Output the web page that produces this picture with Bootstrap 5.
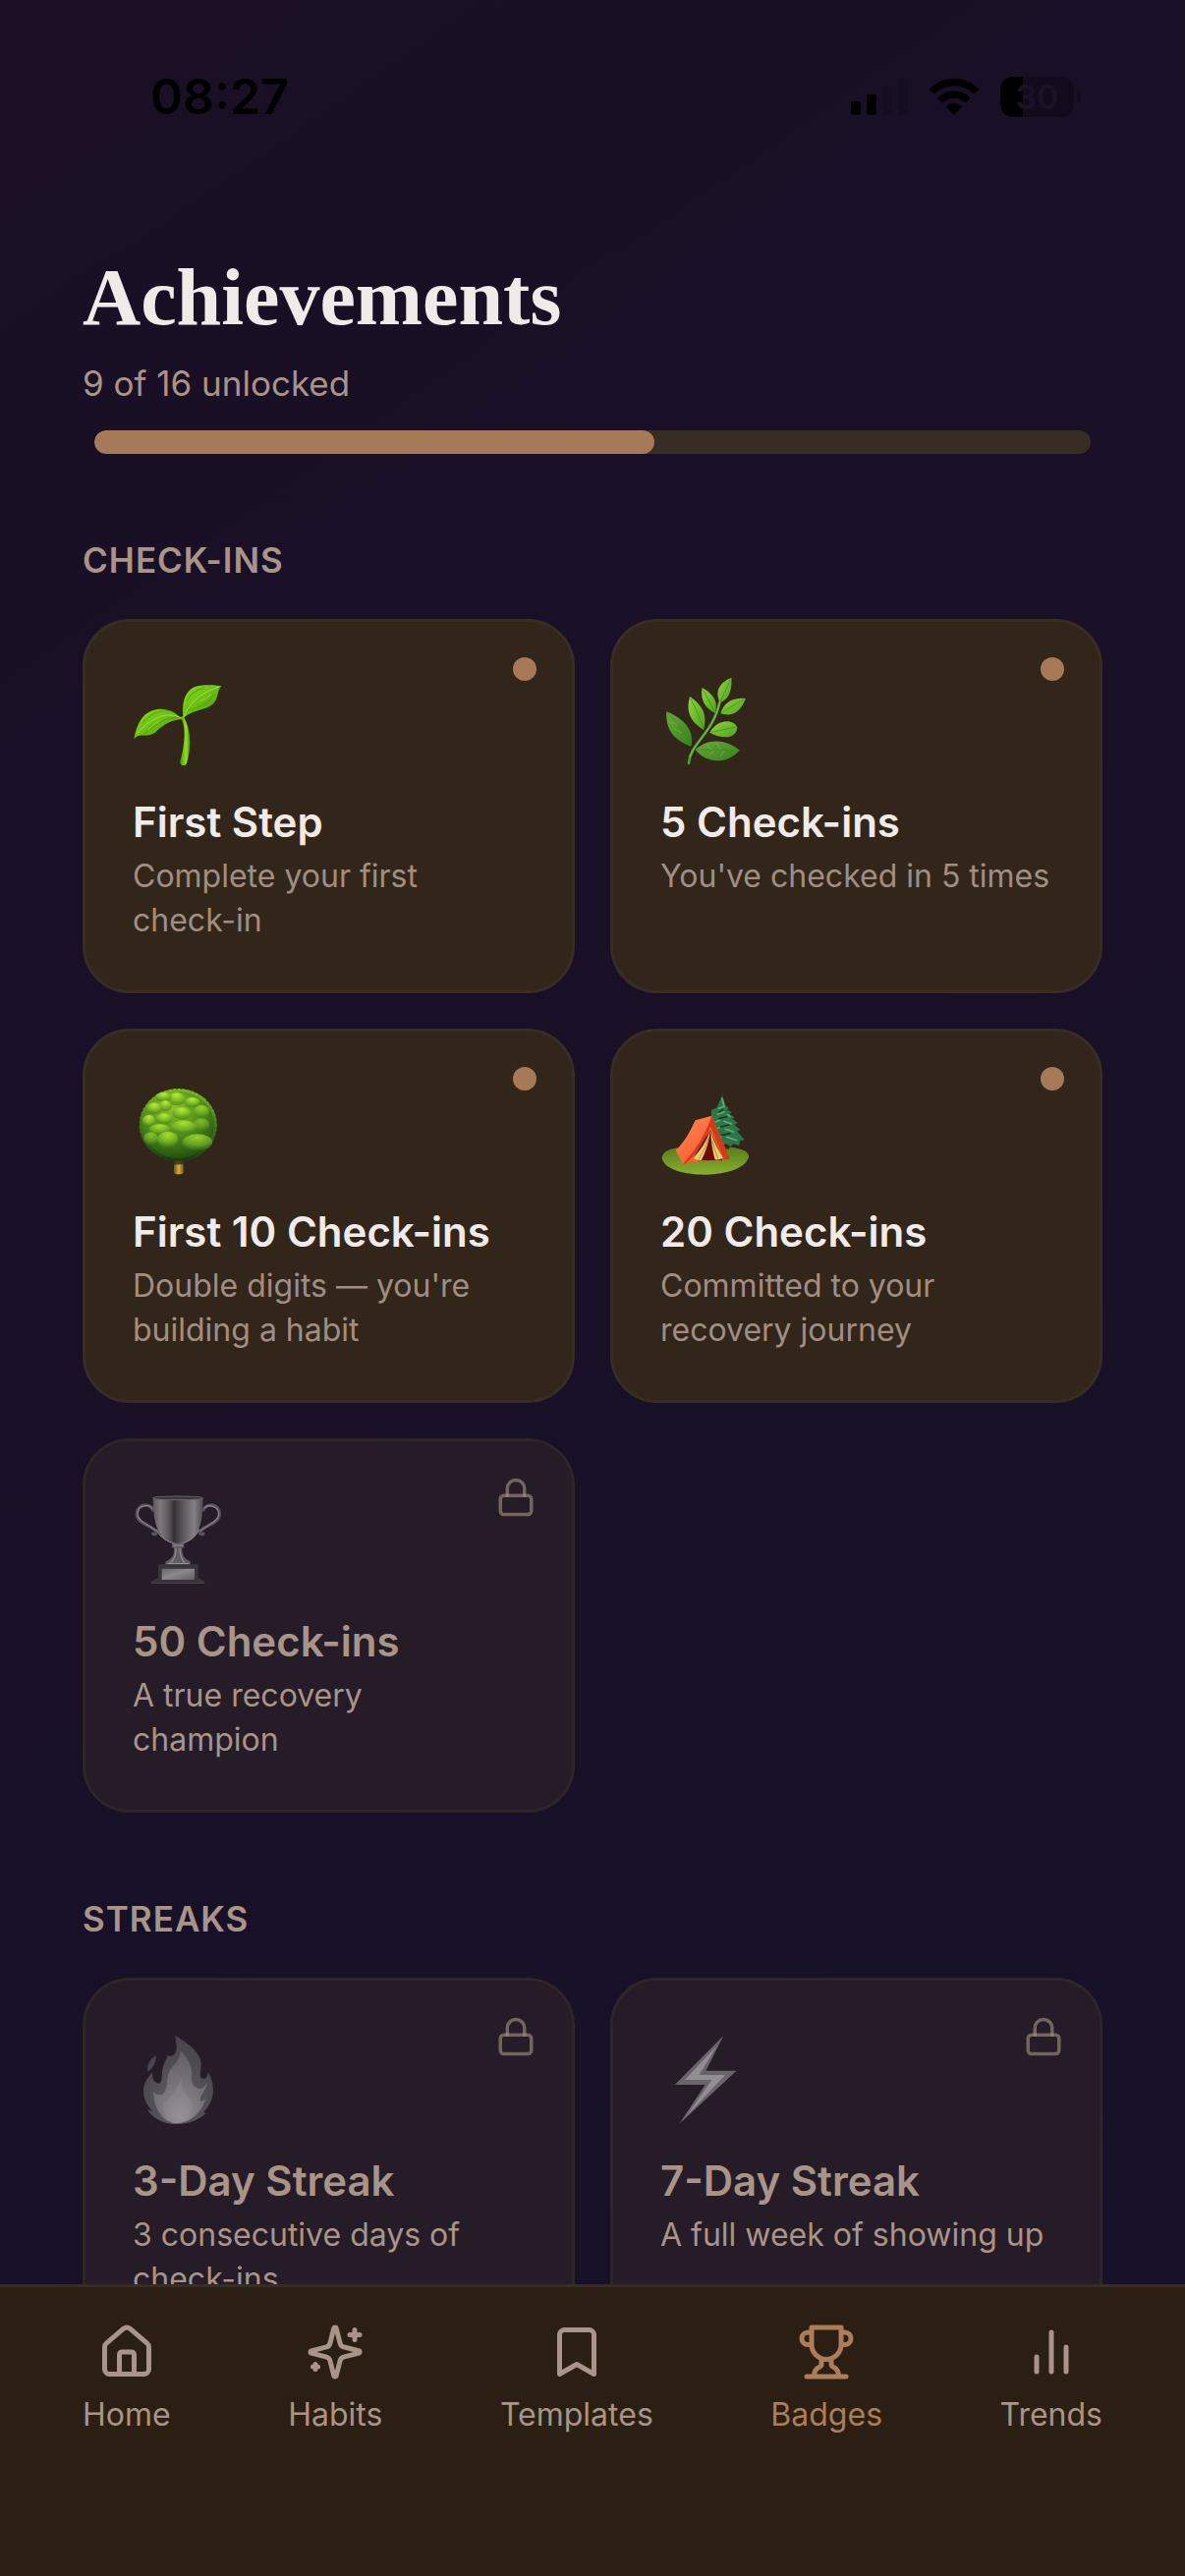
<!DOCTYPE html>
<html lang="en">
<head>
<meta charset="utf-8">
<meta name="viewport" content="width=device-width, initial-scale=1">
<title>Achievements</title>
<link rel="stylesheet" href="https://cdn.jsdelivr.net/npm/bootstrap@5.3.0/dist/css/bootstrap.min.css">
<style>
  :root {
    --accent: #a67a58;
    --muted: #a89488;
    --line: #382d24;
    --gutter: 84px;
  }
  body { font-family: Inter, "Liberation Sans", sans-serif; color: #f0ebe8; background: #1a1026; }
  .app { background: linear-gradient(145deg, #1a0f25 0%, #191027 50%, #161229 100%); }
  .scroll-area { scrollbar-width: none; min-height: 0; }
  .scroll-area::-webkit-scrollbar { display: none; }

  .statusbar { color: #000; padding: 68px 106px 0 153px; }
  .clock { font-size: 50px; line-height: 60px; font-weight: 600; }
  .status-icons { gap: 22px; }
  .battery { gap: 3px; }
  .battery-body { width: 75px; height: 41px; border-radius: 13px; font-size: 34px; line-height: 41px; font-weight: 600; color: #1b1128; background: linear-gradient(90deg, #000 31%, #130b1b 31%); }
  .battery-tip { width: 4px; height: 12px; border-radius: 0 4px 4px 0; background: #130b1b; }

  .page { padding: 127px var(--gutter) 60px; }
  .page-title { font-family: "Liberation Serif", serif; font-weight: 700; font-size: 82px; line-height: 96px; margin: 0 0 15px; }
  .unlocked-count { font-size: 35px; line-height: 48px; color: var(--muted); margin: 0 0 24px; }
  .progress { --bs-progress-height: 24px; --bs-progress-bg: #382d24; --bs-progress-bar-bg: var(--accent); --bs-progress-border-radius: 12px; margin: 0 12px; }
  .progress-bar { border-radius: 12px; }
  .section-label { font-size: 35px; line-height: 48px; font-weight: 600; letter-spacing: 1px; color: var(--muted); margin: 84px 0 36px; }
  .badge-grid { --bs-gutter-x: 36px; --bs-gutter-y: 36px; }

  .award { --bs-card-bg: #32261b; --bs-card-border-color: #382d24; --bs-card-border-width: 3px; --bs-card-border-radius: 48px; color: #f0ebe8; padding: 53px 40px 49px 48px; }
  .award.locked { --bs-card-bg: #251c27; --bs-card-border-color: #2d2526; color: var(--muted); }
  .award .art { width: 92px; height: 96px; margin-bottom: 28px; }
  .award h3 { font-size: 42px; line-height: 54px; font-weight: 600; margin: 0 0 5px; }
  .award p { font-size: 32px; line-height: 45px; min-height: 90px; margin: 0; color: #a18e82; }
  .award.locked p { color: var(--muted); }
  .award .earned { position: absolute; top: 36px; right: 36px; width: 24px; height: 24px; border-radius: 50%; background: var(--accent); }
  .award .lock { position: absolute; top: 36px; right: 36px; width: 42px; height: 42px; stroke: var(--muted); stroke-opacity: .6; }
  .line-icon { fill: none; stroke: currentColor; stroke-width: 2; stroke-linecap: round; stroke-linejoin: round; }

  .tabbar { background: #2b1f13; border-top: 3px solid var(--line); padding: 36px var(--gutter) 144px; }
  .tabbar a { color: var(--muted); font-size: 32px; line-height: 40px; gap: 14px; text-decoration: none; }
  .tabbar a.active { color: #ab7d59; }
  .tabbar svg { width: 60px; height: 60px; }
</style>
<script src="https://cdn.jsdelivr.net/npm/bootstrap@5.3.0/dist/js/bootstrap.bundle.min.js" defer></script>
</head>
<body>
<div class="app d-flex flex-column vh-100 overflow-hidden">
  <div class="scroll-area flex-grow-1 overflow-auto">
    <div class="statusbar d-flex justify-content-between align-items-center">
      <span class="clock">08:27</span>
      <div class="status-icons d-flex align-items-center">
        <svg width="58" height="37" viewBox="0 0 58 37" aria-hidden="true">
          <rect x="0" y="23" width="10" height="14" rx="3"/>
          <rect x="16" y="16" width="10" height="21" rx="3"/>
          <rect x="32" y="8" width="10" height="29" rx="3" fill="#150d20"/>
          <rect x="48" y="0" width="10" height="37" rx="3" fill="#150d20"/>
        </svg>
        <svg width="50" height="37" viewBox="0 0 50 37" aria-hidden="true">
          <path d="M25 0C35 0 43.500 4 49.500 10.200Q50.300 11 49.500 11.800L46 15.300Q45.200 16 44.400 15.200C39 10 32.500 7.300 25 7.300S11 10 5.600 15.200Q4.800 16 4 15.300L.5 11.800Q-.3 11 .5 10.200C6.500 4 15 0 25 0Z"/>
          <path d="M25 12.500C31.500 12.500 36.800 15 41 19Q41.800 19.800 41 20.600L37.300 24.200Q36.500 25 35.700 24.200C32.800 21.500 29.200 20 25 20S17.200 21.500 14.300 24.200Q13.500 25 12.700 24.200L9 20.600Q8.200 19.800 9 19C13.200 15 18.500 12.500 25 12.500Z"/>
          <path d="M25 25C28 25 30.500 26 32.500 27.700Q33.300 28.500 32.500 29.300L25.800 36.200Q25 37 24.200 36.200L17.500 29.300Q16.700 28.500 17.500 27.700C19.500 26 22 25 25 25Z"/>
        </svg>
        <div class="battery d-flex align-items-center">
          <span class="battery-body text-center">30</span>
          <span class="battery-tip"></span>
        </div>
      </div>
    </div>

    <main class="page">
      <h1 class="page-title">Achievements</h1>
      <p class="unlocked-count">9 of 16 unlocked</p>
      <div class="progress" role="progressbar" aria-label="Achievements unlocked" aria-valuenow="9" aria-valuemin="0" aria-valuemax="16">
        <div class="progress-bar" style="width: 56.25%"></div>
      </div>

      <h2 class="section-label">CHECK-INS</h2>
      <div class="row badge-grid">
        <div class="col-6">
          <article class="card award h-100">
            <span class="earned"></span>
            <svg class="art" viewBox="168 198 276 288" aria-hidden="true">
              <defs>
                <linearGradient id="leafA" x1="0" y1="0" x2="1" y2="1"><stop offset="0" stop-color="#8ae01c"/><stop offset=".5" stop-color="#6abb12"/><stop offset="1" stop-color="#4a8d0c"/></linearGradient>
                <linearGradient id="stemA" x1="0" x2="1"><stop offset="0" stop-color="#4b930a"/><stop offset=".6" stop-color="#8fe01c"/><stop offset="1" stop-color="#4f930c"/></linearGradient>
              </defs>
              <path d="M314 330C328 350 332 395 313 466Q312 477 324 477Q332 477 334 468C350 410 343 360 322 326Z" fill="url(#stemA)"/>
              <path d="M320 337C292 336 262 352 240 374C222 390 202 384 190 386Q180 386 172 397C176 372 184 346 202 326C234 296 286 298 320 337Z" fill="url(#leafA)"/>
              <path d="M322 336C318 290 324 254 356 238C384 228 418 232 440 235C428 244 430 258 424 274C408 314 348 302 322 336Z" fill="url(#leafA)"/>
              <g fill="none" stroke-linecap="round">
                <path d="M318 333C275 312 230 325 180 382" stroke="#9adf58" stroke-width="3"/>
                <path d="M325 328C340 290 370 258 430 238" stroke="#9adf58" stroke-width="3"/>
                <path d="M300 330C260 335 230 355 205 378M284 312C250 306 220 322 200 345M338 308C370 300 400 290 415 262M334 280C342 262 360 246 386 240" stroke="#4f9a0c" stroke-width="4" opacity=".55"/>
                <path d="M250 342Q228 354 214 370M372 282Q392 276 408 260" stroke="#a8ee40" stroke-width="3" opacity=".6"/>
              </g>
            </svg>
            <h3>First Step</h3>
            <p>Complete your first<br>check-in</p>
          </article>
        </div>
        <div class="col-6">
          <article class="card award h-100">
            <span class="earned"></span>
            <svg class="art" viewBox="189 198 276 288" aria-hidden="true">
              <defs>
                <linearGradient id="leafB" x1="0" y1="0" x2="1" y2="1"><stop offset="0" stop-color="#8dd63a"/><stop offset="1" stop-color="#4fa022"/></linearGradient>
                <linearGradient id="leafC" x1="0" y1="0" x2="1" y2="1"><stop offset="0" stop-color="#69a83a"/><stop offset="1" stop-color="#35821a"/></linearGradient>
              </defs>
              <path d="M276 470C280 410 350 380 370 285" fill="none" stroke="#4f9d2c" stroke-width="8" stroke-linecap="round"/>
              <path d="M279 450C300 400 355 365 370 285" fill="none" stroke="#82c64e" stroke-width="3" stroke-linecap="round"/>
              <path d="M208 313C250 330 296 362 283 420C238 402 204 376 208 313Z" fill="url(#leafC)"/>
              <path d="M296 430C330 395 386 395 431 431C392 475 330 472 296 430Z" fill="url(#leafC)"/>
              <path d="M279 267C310 288 336 316 321 369C288 346 264 322 279 267Z" fill="url(#leafB)"/>
              <path d="M317 240C348 258 368 280 356 317C326 302 310 278 317 240Z" fill="url(#leafB)"/>
              <path d="M406 209C408 245 402 272 371 286C354 250 370 224 406 209Z" fill="url(#leafB)"/>
              <path d="M450 273C434 310 414 332 373 318C384 284 410 270 450 273Z" fill="url(#leafB)"/>
              <path d="M340 377C360 338 412 332 424 362C420 396 380 398 340 377Z" fill="url(#leafB)"/>
              <path d="M210 317Q255 355 280 414M300 430H425M281 272Q302 310 320 362M319 245Q338 278 354 312M404 214Q388 250 373 282M445 275Q405 296 378 316M345 376Q380 368 418 360" fill="none" stroke="#3c8a1c" stroke-width="3" opacity=".7"/>
              <path d="M222 344l20 8M230 364l24 14M330 412l16 18M360 408l14 20M340 444l14-12M372 450l12-18" fill="none" stroke="#85c258" stroke-width="3" opacity=".5"/>
            </svg>
            <h3>5 Check-ins</h3>
            <p>You've checked in 5 times</p>
          </article>
        </div>
        <div class="col-6">
          <article class="card award h-100">
            <span class="earned"></span>
            <svg class="art" viewBox="168 189 276 288" aria-hidden="true">
              <defs>
                <radialGradient id="crown" cx=".42" cy=".25" r=".8"><stop offset="0" stop-color="#8fc528"/><stop offset=".5" stop-color="#4f8f1a"/><stop offset="1" stop-color="#1c4212"/></radialGradient>
                <radialGradient id="puff" cx=".5" cy=".2" r=".8"><stop offset="0" stop-color="#b4ee34"/><stop offset=".6" stop-color="#76b224"/><stop offset="1" stop-color="#3f7a18" stop-opacity=".5"/></radialGradient>
                <linearGradient id="rim" x1="0" y1="0" x2="0" y2="1"><stop offset="0" stop-color="#7db426"/><stop offset=".5" stop-color="#3f7c1a"/><stop offset="1" stop-color="#1c4212"/></linearGradient>
                <linearGradient id="trunk" x1="0" x2="1"><stop offset="0" stop-color="#6a4e18"/><stop offset=".5" stop-color="#d8ac3c"/><stop offset="1" stop-color="#7a5a20"/></linearGradient>
              </defs>
              <path d="M294 415H323V460Q323 466 308 466T294 460Z" fill="url(#trunk)"/>
              <path d="M294 415H323V436H294Z" fill="#2a2410" opacity=".75"/>
              <ellipse cx="307" cy="315" rx="116" ry="108" fill="url(#crown)"/>
              <ellipse cx="307" cy="315" rx="114" ry="106" fill="none" stroke="url(#rim)" stroke-width="10" stroke-linecap="round" stroke-dasharray="5 9"/>
              <g fill="url(#puff)">
                <ellipse cx="302" cy="236" rx="28" ry="20"/><ellipse cx="262" cy="230" rx="24" ry="15"/><ellipse cx="350" cy="246" rx="24" ry="16"/>
                <ellipse cx="268" cy="257" rx="20" ry="17"/><ellipse cx="234" cy="265" rx="24" ry="18"/><ellipse cx="318" cy="280" rx="29" ry="19"/>
                <ellipse cx="264" cy="296" rx="26" ry="17"/><ellipse cx="218" cy="303" rx="20" ry="19"/><ellipse cx="378" cy="274" rx="24" ry="20" opacity=".7"/>
                <ellipse cx="324" cy="322" rx="40" ry="21" opacity=".85"/><ellipse cx="250" cy="329" rx="33" ry="17" opacity=".85"/><ellipse cx="378" cy="315" rx="25" ry="20" opacity=".5"/>
                <ellipse cx="275" cy="360" rx="32" ry="25" opacity=".85"/><ellipse cx="366" cy="368" rx="46" ry="25" opacity=".75"/><ellipse cx="224" cy="357" rx="23" ry="20" opacity=".6"/>
              </g>
              <path d="M240 398Q300 440 374 398Q340 425 307 425T240 398Z" fill="#1b3a10" opacity=".8"/>
            </svg>
            <h3>First 10 Check-ins</h3>
            <p>Double digits — you're<br>building a habit</p>
          </article>
        </div>
        <div class="col-6">
          <article class="card award h-100">
            <span class="earned"></span>
            <svg class="art" viewBox="189 189 276 288" aria-hidden="true">
              <defs>
                <linearGradient id="grass" x1="0" y1="0" x2="0" y2="1"><stop offset="0" stop-color="#587c1c"/><stop offset="1" stop-color="#86b02e"/></linearGradient>
                <linearGradient id="tent" x1="0" y1="0" x2="1" y2="1"><stop offset="0" stop-color="#ff8d55"/><stop offset=".5" stop-color="#fb6a3c"/><stop offset="1" stop-color="#d8401c"/></linearGradient>
              </defs>
              <path d="M194 417C194 382 262 380 326 380S459 382 459 412C452 446 392 467 326 467S200 450 194 417Z" fill="url(#grass)"/>
              <path d="M386 365h13v24h-13z" fill="#3a2812"/>
              <path d="M378 225L389 257L399 264L392 268L408 276L399 281L416 292L408 296L426 309L415 314L433 330L423 334L446 360L432 364L430 379L412 373L404 381L390 373L372 378L345 350V270L362 262Z" fill="#2e7548"/>
              <path d="M378 235l6 24-16 6M384 275l-20 8M394 283l8 6M372 300l-14 6M384 304l22 8M370 323l-14 5M388 328l24 8M376 350l-12 6M392 352l30 10" fill="none" stroke="#5fae78" stroke-width="5" stroke-linecap="round"/>
              <path d="M380 268l-12 8M392 290l-24 6M398 315l-24 6M402 341l-26 6" fill="none" stroke="#173f28" stroke-width="5" stroke-linecap="round"/>
              <path d="M296 301L346 287L400 420L300 428L258 435L236 392C262 370 280 335 296 301Z" fill="url(#tent)"/>
              <path d="M346 287C330 340 296 392 258 435L266 433C304 400 326 360 342 320L384 420H402Z" fill="#d23a18"/>
              <path d="M342 330L289 416L308 424L378 422Z" fill="#6d0c04"/>
              <path d="M341 332C330 365 312 392 289 416Q298 424 314 423C328 396 338 366 341 332Z" fill="#ecd070"/>
              <path d="M343 332C344 365 348 394 356 421Q370 422 381 416C364 390 350 362 343 332Z" fill="#ecd070"/>
              <path d="M338 350Q326 390 306 420M348 362Q354 394 366 418" stroke="#b08c38" stroke-width="3" fill="none"/>
            </svg>
            <h3>20 Check-ins</h3>
            <p>Committed to your<br>recovery journey</p>
          </article>
        </div>
        <div class="col-6">
          <article class="card award locked h-100">
            <svg class="lock line-icon" viewBox="0 0 24 24" role="img" aria-label="Locked"><rect x="3" y="11" width="18" height="11" rx="2"/><path d="M7 11V7a5 5 0 0 1 10 0v4"/></svg>
            <svg class="art" viewBox="168 203 276 279" preserveAspectRatio="none" aria-hidden="true">
              <defs>
                <linearGradient id="cup" x1="0" x2="1"><stop offset="0" stop-color="#5d575d"/><stop offset=".15" stop-color="#7f797f"/><stop offset=".32" stop-color="#5c565c"/><stop offset=".42" stop-color="#353036"/><stop offset=".6" stop-color="#5d585e"/><stop offset=".82" stop-color="#857f86"/><stop offset="1" stop-color="#504a50"/></linearGradient>
                <linearGradient id="plate" x1="0" y1="0" x2="1" y2="1"><stop offset="0" stop-color="#6a656b"/><stop offset=".45" stop-color="#8d878e"/><stop offset="1" stop-color="#625d63"/></linearGradient>
              </defs>
              <g fill="none" stroke-linecap="round">
                <path d="M230 252C222 232 182 232 181 264C181 292 226 298 241 316Q242 326 230 323" stroke="#57525a" stroke-width="10"/>
                <path d="M228 248C220 234 184 236 183 264C184 290 222 296 238 314" stroke="#8d888e" stroke-width="3"/>
                <path d="M384 252C392 232 432 232 433 264C433 292 388 298 373 316Q372 326 384 323" stroke="#57525a" stroke-width="10"/>
                <path d="M388 246C400 234 430 240 431 264C430 290 392 296 376 314" stroke="#8d888e" stroke-width="3"/>
              </g>
              <path d="M230 216H383C382 290 374 334 320 352H293C240 334 232 290 230 216Z" fill="url(#cup)"/>
              <ellipse cx="306" cy="217" rx="76" ry="5" fill="#3a353b" stroke="#6b666c" stroke-width="3"/>
              <path d="M240 310Q260 346 300 352M372 310Q354 344 314 352" fill="none" stroke="#8d888e" stroke-width="3"/>
              <path d="M288 350H325V364H319C318 392 330 396 345 406V417H268V406C284 396 296 392 294 364H288Z" fill="#625d63"/>
              <path d="M300 366Q302 392 284 408M312 366Q312 392 326 408M292 357H322M274 411H340" fill="none" stroke="#9a949b" stroke-width="3"/>
              <path d="M246 413H368V452L388 464V470H224V464L246 452Z" fill="#39343b"/>
              <path d="M257 426H357V459H257Z" fill="url(#plate)"/>
              <path d="M226 469H387" stroke="#514c53" stroke-width="2"/>
            </svg>
            <h3>50 Check-ins</h3>
            <p>A true recovery<br>champion</p>
          </article>
        </div>
      </div>

      <h2 class="section-label">STREAKS</h2>
      <div class="row badge-grid">
        <div class="col-6">
          <article class="card award locked h-100">
            <svg class="lock line-icon" viewBox="0 0 24 24" role="img" aria-label="Locked"><rect x="3" y="11" width="18" height="11" rx="2"/><path d="M7 11V7a5 5 0 0 1 10 0v4"/></svg>
            <svg class="art" viewBox="168 207 276 288" aria-hidden="true">
              <defs>
                <radialGradient id="fireOut" cx=".5" cy=".75" r=".75"><stop offset="0" stop-color="#666168"/><stop offset=".6" stop-color="#504b52"/><stop offset="1" stop-color="#484349"/></radialGradient>
                <radialGradient id="fireIn" cx=".5" cy=".9" r=".85"><stop offset="0" stop-color="#989299"/><stop offset=".35" stop-color="#807a81"/><stop offset="1" stop-color="#646067"/></radialGradient>
              </defs>
              <path d="M298 215C330 236 374 262 377 300C378 320 370 338 378 346C392 352 398 340 397 327C410 344 414 366 414 386C412 416 398 434 384 450L392 452C372 472 340 486 300 486C262 486 232 470 212 441L228 447C210 426 201 408 201 384C201 362 214 344 228 328C226 350 236 362 250 362C262 350 254 330 262 308C268 292 274 284 275 276C290 284 302 272 302 250C302 236 298 226 298 215Z" fill="url(#fireOut)"/>
              <path d="M238 276C242 292 234 310 215 326C210 308 218 292 238 276Z" fill="#4b464d"/>
              <path d="M313 262C336 284 350 306 348 336C346 360 352 374 370 378C386 380 386 370 396 360C396 380 374 394 374 414Q384 420 392 406C384 440 350 484 300 484C262 480 234 444 231 386C242 400 258 400 266 388C276 372 270 344 282 322C294 302 314 292 313 262Z" fill="url(#fireIn)"/>
              <path d="M320 346C312 372 324 390 342 406C360 424 350 460 318 484H296C262 468 254 430 272 414C296 394 304 370 320 346Z" fill="#948e95" opacity=".38"/>
            </svg>
            <h3>3-Day Streak</h3>
            <p>3 consecutive days of<br>check-ins</p>
          </article>
        </div>
        <div class="col-6">
          <article class="card award locked h-100">
            <svg class="lock line-icon" viewBox="0 0 24 24" role="img" aria-label="Locked"><rect x="3" y="11" width="18" height="11" rx="2"/><path d="M7 11V7a5 5 0 0 1 10 0v4"/></svg>
            <svg class="art" viewBox="166 207 242 288" preserveAspectRatio="none" aria-hidden="true">
              <path d="M335 216L288 323H370L217 485L286 366H205Z" fill="#69646a"/>
              <path d="M318 246L270 336H340L236 462L304 351H232Z" fill="#928c93"/>
            </svg>
            <h3>7-Day Streak</h3>
            <p>A full week of showing up</p>
          </article>
        </div>
      </div>
    </main>
  </div>

  <nav class="tabbar d-flex justify-content-between flex-shrink-0" aria-label="Main">
    <a href="#" class="d-flex flex-column align-items-center">
      <svg class="line-icon" viewBox="0 0 24 24" aria-hidden="true"><path d="M15 21v-8a1 1 0 0 0-1-1h-4a1 1 0 0 0-1 1v8"/><path d="M3 10a2 2 0 0 1 .709-1.528l7-5.999a2 2 0 0 1 2.582 0l7 5.999A2 2 0 0 1 21 10v9a2 2 0 0 1-2 2H5a2 2 0 0 1-2-2z"/></svg>
      <span>Home</span>
    </a>
    <a href="#" class="d-flex flex-column align-items-center">
      <svg class="line-icon" viewBox="0 0 24 24" aria-hidden="true"><path d="M9.937 15.500A2 2 0 0 0 8.500 14.063l-6.135-1.582a.5.5 0 0 1 0-.962L8.500 9.936A2 2 0 0 0 9.937 8.500l1.582-6.135a.5.5 0 0 1 .963 0L14.063 8.500A2 2 0 0 0 15.500 9.937l6.135 1.581a.5.5 0 0 1 0 .964L15.500 14.063a2 2 0 0 0-1.437 1.437l-1.582 6.135a.5.5 0 0 1-.963 0z"/><path d="M20 3v4M22 5h-4M4 17v2M5 18H3"/></svg>
      <span>Habits</span>
    </a>
    <a href="#" class="d-flex flex-column align-items-center">
      <svg class="line-icon" viewBox="0 0 24 24" aria-hidden="true"><path d="m19 21-7-4-7 4V5a2 2 0 0 1 2-2h10a2 2 0 0 1 2 2v16z"/></svg>
      <span>Templates</span>
    </a>
    <a href="#" class="active d-flex flex-column align-items-center" aria-current="page">
      <svg class="line-icon" viewBox="0 0 24 24" aria-hidden="true"><path d="M6 9H4.500a2.500 2.500 0 0 1 0-5H6M18 9h1.500a2.500 2.500 0 0 0 0-5H18M4 22h16M10 14.660V17c0 .55-.47.98-.97 1.210C7.850 18.750 7 20.240 7 22M14 14.660V17c0 .55.47.98.97 1.210C16.150 18.750 17 20.240 17 22M18 2H6v7a6 6 0 0 0 12 0V2Z"/></svg>
      <span>Badges</span>
    </a>
    <a href="#" class="d-flex flex-column align-items-center">
      <svg class="line-icon" viewBox="0 0 24 24" aria-hidden="true"><path d="M18 20V10M12 20V4M6 20v-6"/></svg>
      <span>Trends</span>
    </a>
  </nav>
</div>
</body>
</html>
